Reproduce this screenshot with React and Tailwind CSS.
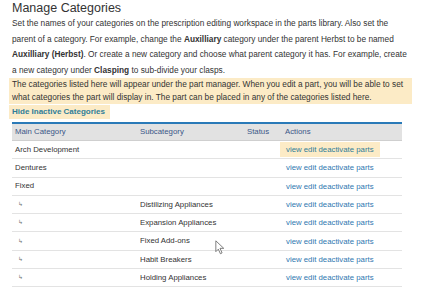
const rows = [
    { main: 'Arch Development', sub: '', highlight: true },
    { main: 'Dentures', sub: '' },
    { main: 'Fixed', sub: '' },
    { main: '↳', sub: 'Distilizing Appliances' },
    { main: '↳', sub: 'Expansion Appliances' },
    { main: '↳', sub: 'Fixed Add-ons' },
    { main: '↳', sub: 'Habit Breakers' },
    { main: '↳', sub: 'Holding Appliances' },
];

function CursorIcon() {
    return (
        <svg width="10" height="15" viewBox="0 0 12 18" className="absolute left-[215px] top-[240px]">
            <path d="M1 1 L1 14 L4 11 L6.5 16.5 L8.5 15.5 L6 10 L10.5 10 Z" fill="#fff" stroke="#666" strokeWidth="1" />
        </svg>
    );
}

export default function App() {
    return (
        <div className="relative w-[428px] h-[288px] overflow-hidden bg-white font-['Liberation_Sans',Arial,sans-serif] text-[#333]">
            <div className="pl-[12px]">
                <h1 className="text-[12.5px] leading-[16px] text-[#333]">Manage Categories</h1>
                <p className="text-[8.3px] leading-[15.5px] w-[400px]">
                    Set the names of your categories on the prescription editing workspace in the parts library. Also set the<br />
                    parent of a category. For example, change the <b>Auxilliary</b> category under the parent Herbst to be named<br />
                    <b>Auxilliary (Herbst)</b>. Or create a new category and choose what parent category it has. For example, create<br />
                    a new category under <b>Clasping</b> to sub-divide your clasps.
                </p>
            </div>
            <div className="ml-[9px] w-[403px] bg-[#fcebc6] pl-[3px] text-[8.3px] leading-[13px]">
                The categories listed here will appear under the part manager. When you edit a part, you will be able to set<br />
                what categories the part will display in. The part can be placed in any of the categories listed here.
            </div>
            <div className="ml-[9px] mt-[1px] w-[101px] h-[14px] bg-[#fcebc6] pl-[3px] text-[8px] leading-[14px] font-semibold whitespace-nowrap text-[#2f7d99]">
                Hide Inactive Categories
            </div>
            <div className="ml-[12px] mt-[3px] w-[390px] border-t-2 border-[#2a7ab8] text-[7.8px] text-[#333]">
                <div className="flex h-[17px] items-center bg-[#e2e2e2] border-b border-[#cfcfcf] text-[#3b5788]">
                    <div className="w-[128px] shrink-0 pl-[3px]">Main Category</div>
                    <div className="w-[107px] shrink-0">Subcategory</div>
                    <div className="w-[38px] shrink-0">Status</div>
                    <div>Actions</div>
                </div>
                {rows.map((row, i) => (
                    <div key={i} className="flex h-[18.3px] items-center border-b border-[#e3e3e3]">
                        <div className={`w-[128px] shrink-0 ${row.main === '↳' ? 'text-[6px] pl-[6px] text-[#777]' : 'pl-[3px] text-[#333]'}`}>{row.main}</div>
                        <div className="w-[107px] shrink-0 text-[#333]">{row.sub}</div>
                        <div className="w-[33px] shrink-0"></div>
                        <div className={`px-[6px] leading-[15px] ${row.highlight ? 'bg-[#fcebc6] text-[#2f7d99]' : 'text-[#2f78b0]'}`}>
                            view edit deactivate parts
                        </div>
                    </div>
                ))}
            </div>
            <CursorIcon />
        </div>
    );
}
